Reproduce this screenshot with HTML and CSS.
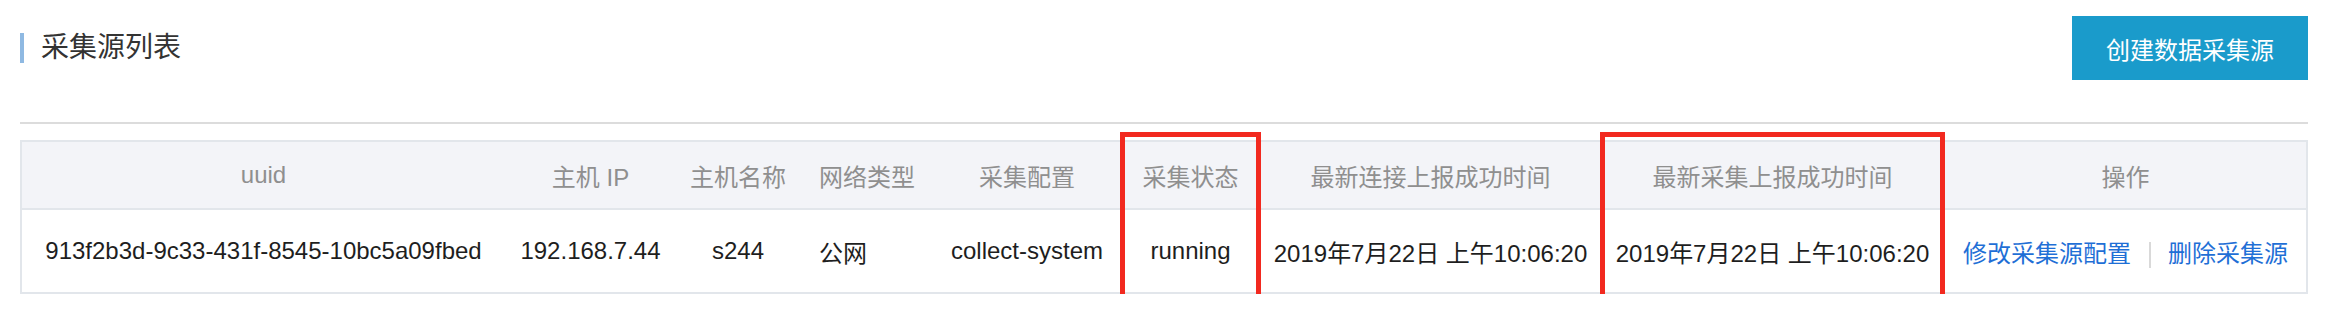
FILE: index.html
```html
<!DOCTYPE html>
<html>
<head>
    <title>采集源列表</title>
    <link rel="stylesheet" href="styles.css">
</head>
<body>
    <div class="page">
        <div class="page-head">
            <h2 class="page-title">采集源列表</h2>
            <button class="btn-create">创建数据采集源</button>
        </div>
        <div class="divider"></div>

        <table class="source-table">
            <colgroup>
                <col style="width: 483px">
                <col style="width: 171px">
                <col style="width: 124px">
                <col style="width: 134px">
                <col style="width: 186px">
                <col style="width: 141px">
                <col style="width: 339px">
                <col style="width: 345px">
                <col style="width: 361px">
            </colgroup>
            <thead>
                <tr>
                    <th>uuid</th>
                    <th>主机 IP</th>
                    <th>主机名称</th>
                    <th>网络类型</th>
                    <th>采集配置</th>
                    <th class="marked">采集状态</th>
                    <th>最新连接上报成功时间</th>
                    <th class="marked">最新采集上报成功时间</th>
                    <th>操作</th>
                </tr>
            </thead>
            <tbody>
                <tr>
                    <td>913f2b3d-9c33-431f-8545-10bc5a09fbed</td>
                    <td>192.168.7.44</td>
                    <td>s244</td>
                    <td class="net">公网</td>
                    <td>collect-system</td>
                    <td>running</td>
                    <td>2019年7月22日 上午10:06:20</td>
                    <td>2019年7月22日 上午10:06:20</td>
                    <td class="actions">
                        <a href="#">修改采集源配置</a><span class="sep"></span><a href="#">删除采集源</a>
                    </td>
                </tr>
            </tbody>
        </table>
    </div>
</body>
</html>
```

FILE: styles.css
```css
body {
    margin: 0;
    font-family: "Liberation Sans", "Noto Sans CJK SC", sans-serif;
    background-color: #fff;
    color: #333;
}

.page {
    padding: 16px 20px 0 20px;
}

.page-head {
    display: flex;
    align-items: center;
    justify-content: space-between;
    height: 64px;
}

.page-title {
    margin: 0;
    font-size: 28px;
    font-weight: normal;
    color: #333;
    line-height: 30px;
    border-left: 4px solid #8fb9e2;
    padding-left: 17px;
}

.btn-create {
    width: 236px;
    height: 64px;
    border: none;
    background-color: #1a9bcb; /* colore principale */
    color: #fff;
    font-family: inherit;
    font-size: 24px;
    padding: 0;
    cursor: pointer;
}

.divider {
    height: 2px;
    background-color: #dcdcdc;
    margin-top: 42px;
}

.source-table {
    width: 2288px;
    margin-top: 16px;
    table-layout: fixed;
    border-collapse: separate;
    border-spacing: 0;
    border: 2px solid #e2e6eb;
    font-size: 24px;
}

.source-table th {
    position: relative;
    height: 66px;
    padding: 0;
    font-weight: normal;
    color: #8f8f8f;
    background-color: #f3f4f8;
    border-bottom: 2px solid #e2e6eb;
    text-align: center;
    vertical-align: middle;
}

.source-table td {
    height: 82px;
    padding: 0;
    color: #1e1e1e;
    text-align: center;
    vertical-align: middle;
    white-space: nowrap;
}

.source-table td.net {
    text-align: left;
    padding-left: 19px;
}

/* riquadro rosso di evidenziazione */
.source-table th.marked::after {
    content: "";
    position: absolute;
    top: -10px;
    left: 0;
    right: 0;
    height: 167px;
    border: 5px solid #f2291f;
    box-sizing: border-box;
}

.actions a {
    color: #1f6fd6;
    text-decoration: none;
}

.actions .sep {
    display: inline-block;
    width: 2px;
    height: 26px;
    background-color: #d9d9d9;
    margin: 0 17px 0 18px;
    vertical-align: middle;
}
```
